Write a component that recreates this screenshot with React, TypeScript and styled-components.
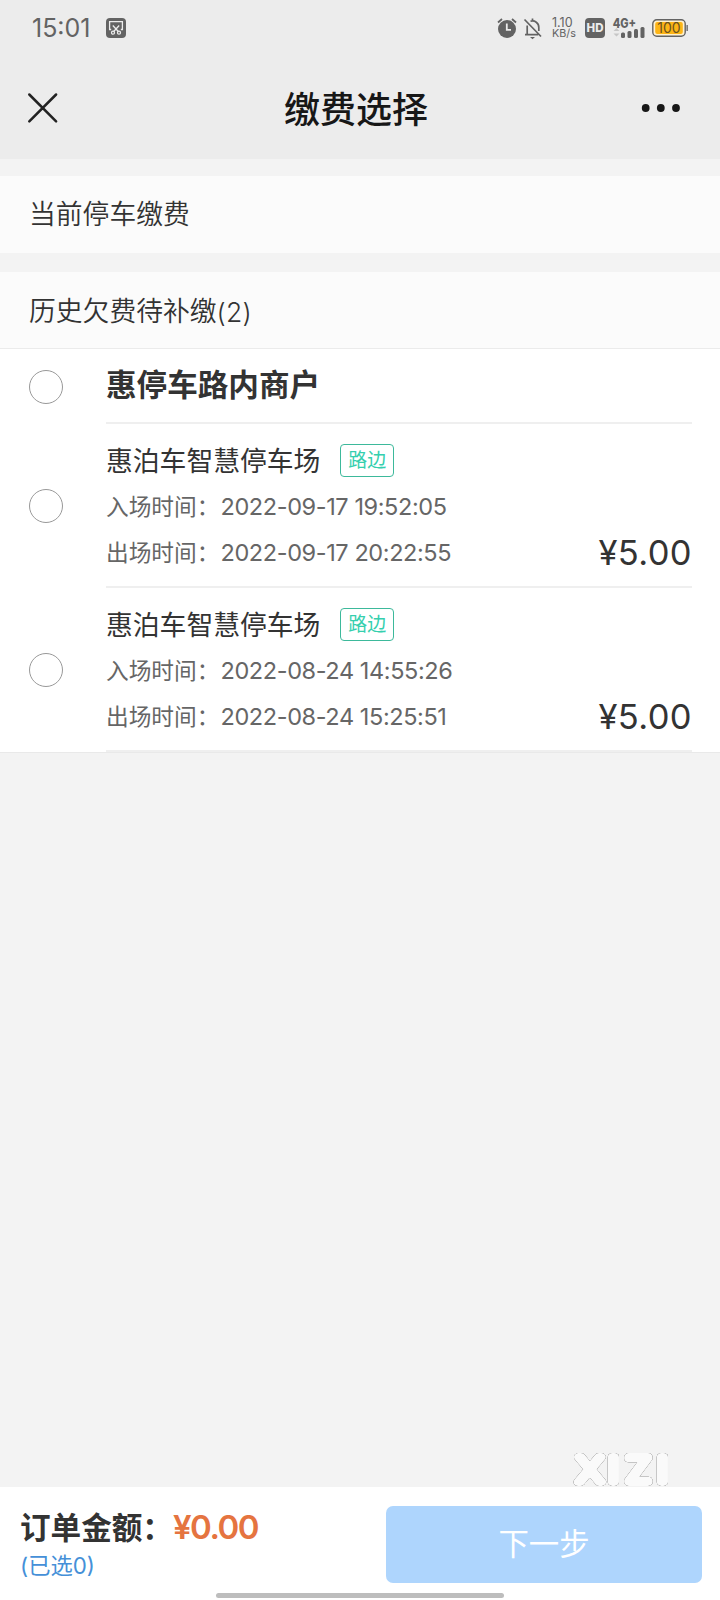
import React from "react";
import styled, { createGlobalStyle } from "styled-components";

const GlobalStyle = createGlobalStyle`
  * { box-sizing: border-box; }
  body {
    margin: 0;
    background: #f3f3f3;
    color: #333;
    font-family: Inter, "Noto Sans CJK SC", sans-serif;
  }
`;

const Page = styled.div`
  position: relative;
  width: 720px;
  height: 1600px;
  display: flex;
  flex-direction: column;
  overflow: hidden;
  white-space: nowrap;
`;

const Header = styled.header`
  height: 159px;
  flex: none;
  background: #ececec;
`;

const StatusBar = styled.div`
  height: 56px;
  padding: 0 32px 0 32px;
  display: flex;
  align-items: center;
  justify-content: space-between;
  color: #636363;
`;

const StatusGroup = styled.div`
  display: flex;
  align-items: center;
`;

const Clock = styled.span`
  width: 74px;
  font-size: 25px;
  line-height: 30px;
`;

const Speed = styled.div`
  width: 33px;
  font-size: 10.8px;
  line-height: 11px;
  display: flex;
  flex-direction: column;
  align-items: flex-start;
`;

const Rate = styled.span`
  font-size: 12.5px;
`;

const NavBar = styled.nav`
  height: 103px;
  padding: 0 39px 0 27px;
  display: grid;
  grid-template-columns: 40px 1fr 40px;
  align-items: center;
`;

const NavTitle = styled.h1`
  margin: 0;
  padding: 4px 0 0 4px;
  text-align: center;
  font-size: 36px;
  line-height: 50px;
  font-weight: 500;
  color: #171717;
`;

const SectionTitle = styled.h2<{ $top: number; $ruled?: boolean }>`
  margin: ${(p) => p.$top}px 0 0;
  height: 77px;
  flex: none;
  padding: ${(p) => (p.$ruled ? "1px 29px 0" : "0 29px 2px")};
  display: flex;
  align-items: center;
  background: #fbfbfb;
  border-bottom: ${(p) => (p.$ruled ? "1px solid #ebebeb" : "none")};
  font-size: 26.8px;
  line-height: 40px;
  font-weight: 350;
`;

const List = styled.section`
  background: #fff;
  flex: none;
  padding-right: 28px;
  box-shadow: 0 1px 0 #e9e9e9;
`;

const Row = styled.div<{ $height: number }>`
  height: ${(p) => p.$height}px;
  padding-left: 29px;
  display: grid;
  grid-template-columns: 77px 1fr;
  align-items: center;
`;

const Radio = styled.span`
  width: 34px;
  height: 34px;
  border: 1px solid #999;
  border-radius: 50%;
`;

const RowBody = styled.div`
  height: 100%;
  border-bottom: 2px solid #efefef;
`;

const Merchant = styled.div`
  font-size: 30.6px;
  line-height: 72px;
  font-weight: 700;
`;

const Lot = styled.div`
  padding-top: 15px;
  height: 58px;
  display: flex;
  align-items: center;
  gap: 20px;
  font-size: 26.8px;
  line-height: 32px;
`;

const Tag = styled.span`
  width: 54px;
  height: 33px;
  border: 1px solid #3db99b;
  border-radius: 4px;
  text-align: center;
  font-size: 19px;
  line-height: 31px;
  color: #35cfae;
`;

const TimeLine = styled.div`
  height: 46px;
  display: flex;
  align-items: center;
  font-size: 22.7px;
  color: #666;
`;

const TimeLabel = styled.span`
  width: 114.5px;
  display: flex;
`;

const Digits = styled.span<{ $size: number; $spacing: number }>`
  padding-top: 2px;
  font-size: ${(p) => p.$size}px;
  letter-spacing: ${(p) => p.$spacing}px;
`;

const Price = styled.span`
  margin-left: auto;
  padding-top: 2px;
  font-size: 34.5px;
  letter-spacing: 0.4px;
  color: #333;
`;

const Footer = styled.footer`
  position: relative;
  margin-top: auto;
  height: 113px;
  flex: none;
  background: #fff;
  padding: 19px 18px 0 20px;
  display: flex;
  justify-content: space-between;
`;

const Total = styled.div`
  display: flex;
  align-items: center;
  height: 42px;
  margin-top: -1px;
  font-size: 30.6px;
  font-weight: 700;
`;

const Amount = styled.span`
  padding-top: 2px;
  font-size: 33px;
  font-weight: 600;
  letter-spacing: -1.5px;
  color: #e57440;
`;

const Selected = styled.div`
  font-size: 22.3px;
  line-height: 37px;
  color: #4590d8;
`;

const NextButton = styled.button`
  width: 316px;
  height: 77px;
  padding: 0;
  border: 0;
  border-radius: 7px;
  background: #aed5fd;
  color: #fff;
  font: 400 30.4px/76px Inter, "Noto Sans CJK SC", sans-serif;
  display: flex;
  justify-content: center;
`;

const HomeBar = styled.div`
  position: absolute;
  left: 216px;
  bottom: 2px;
  width: 288px;
  height: 5px;
  border-radius: 3px;
  background: #bdbdbd;
`;

const Watermark = styled.svg`
  position: absolute;
  right: 46px;
  top: -42px;
  filter: drop-shadow(0 0 0.5px #777) drop-shadow(0 0 0.3px #999);
`;

const StatusIcons = () => (
  <svg width="67" height="28" viewBox="0 0 67 28" fill="#636363">
    <rect x="0" y="4" width="20" height="20" rx="4" />
    <text x="10" y="18.2" textAnchor="middle" fontSize="11.5" fontWeight="800" fill="#ececec">HD</text>
    <text x="27.7" y="13.5" fontSize="13" fontWeight="800" textLength="23.5" lengthAdjust="spacingAndGlyphs">4G+</text>
    <path d="M28.500 17l3-3 3 3zM28.500 19.500h6l-3 3z" fill="#c6c6c6" />
    <rect x="36" y="18.5" width="4" height="5.5" rx="1.5" />
    <rect x="42.5" y="17" width="4" height="7" rx="1.5" />
    <rect x="49" y="15" width="4" height="9" rx="1.5" />
    <rect x="55.5" y="13" width="4" height="11" rx="1.5" />
  </svg>
);

const records = [
  { enter: "2022-09-17 19:52:05", leave: "2022-09-17 20:22:55" },
  { enter: "2022-08-24 14:55:26", leave: "2022-08-24 15:25:51" },
];

export default function App() {
  return (
    <Page lang="zh-CN">
      <GlobalStyle />
      <Header>
        <StatusBar>
          <StatusGroup>
            <Clock>15:01</Clock>
            <svg width="20" height="20" viewBox="0 0 20 20" fill="none" stroke="#ececec" strokeWidth="1.3">
              <rect width="20" height="20" rx="4" fill="#636363" stroke="none" />
              <path d="M5.200 11.500H3.600V3.600h12.800v7.900h-1.600M6.800 7.500l5.500 6M13.200 7.500l-5.500 6" />
              <circle cx="7" cy="14.7" r="1.5" />
              <circle cx="13" cy="14.7" r="1.5" />
            </svg>
          </StatusGroup>
          <StatusGroup>
            <svg width="55" height="28" viewBox="0 0 55 28" fill="none" stroke="#636363" strokeWidth="1.7">
              <circle cx="10" cy="15" r="9" fill="#636363" stroke="none" />
              <path d="M1 8.500l4-3.500M15 5l4 3.500" strokeWidth="1.8" />
              <path d="M9.800 9.500v6.300h4.200" stroke="#ececec" strokeWidth="1.8" />
              <path d="M27.500 5.500l16.500 17M30.200 11.500v9.200h11M28 20.700h3M33.500 7.300a6.300 6.300 0 0 1 8.300 6.200v3.500" />
              <path d="M33 23h5l-2.500 2.200z" fill="#636363" stroke="none" />
              <path d="M35.500 4.500v2" />
            </svg>
            <Speed>
              <Rate>1.10</Rate>
              <span>KB/s</span>
            </Speed>
            <StatusIcons />
            <svg width="36" height="20" viewBox="0 0 36 20">
              <rect x=".8" y="1.8" width="32.4" height="16.4" rx="4" fill="#fff1cf" stroke="#636363" strokeWidth="1.4" />
              <rect x="3.2" y="4" width="27.6" height="12" rx="2" fill="#fdb515" />
              <rect x="34.5" y="7" width="1.3" height="6" fill="#636363" />
              <text x="17" y="15" textAnchor="middle" fontSize="14" fill="#6b5220">100</text>
            </svg>
          </StatusGroup>
        </StatusBar>
        <NavBar>
          <svg width="32" height="32" viewBox="0 0 32 32" fill="none" stroke="#222" strokeWidth="2.5" strokeLinecap="round">
            <path d="M2.300 2.500l26.800 26.800M29.100 2.500L2.300 29.300" />
          </svg>
          <NavTitle>缴费选择</NavTitle>
          <svg width="40" height="10" viewBox="0 0 40 10" fill="#171717">
            <circle cx="4.7" cy="5" r="3.9" />
            <circle cx="19.8" cy="5" r="3.9" />
            <circle cx="35" cy="5" r="3.9" />
          </svg>
        </NavBar>
      </Header>

      <SectionTitle $top={17}>当前停车缴费</SectionTitle>
      <SectionTitle $top={19} $ruled>
        历史欠费待补缴<Digits $size={26.5} $spacing={0.2}>(2)</Digits>
      </SectionTitle>

      <List>
        <Row $height={75}>
          <Radio />
          <RowBody>
            <Merchant>惠停车路内商户</Merchant>
          </RowBody>
        </Row>
        {records.map((r) => (
          <Row $height={164} key={r.enter}>
            <Radio />
            <RowBody>
              <Lot>
                惠泊车智慧停车场
                <Tag>路边</Tag>
              </Lot>
              <TimeLine>
                <TimeLabel>
                  入场时间<span>：</span>
                </TimeLabel>
                <Digits $size={23.5} $spacing={-0.4}>{r.enter}</Digits>
              </TimeLine>
              <TimeLine>
                <TimeLabel>
                  出场时间<span>：</span>
                </TimeLabel>
                <Digits $size={23.5} $spacing={-0.4}>{r.leave}</Digits>
                <Price>¥5.00</Price>
              </TimeLine>
            </RowBody>
          </Row>
        ))}
      </List>

      <Footer>
        <div>
          <Total>
            订单金额：<Amount>¥0.00</Amount>
          </Total>
          <Selected>(已选0)</Selected>
        </div>
        <NextButton>下一步</NextButton>
        <Watermark width="108" height="52" viewBox="0 0 108 52">
          <text
            transform="scale(1.2 1)"
            x="20 39.6 60.4 80.4"
            y="37.5"
            textAnchor="middle"
            fontSize="33.5"
            fontWeight="200"
            fill="#fafafa"
            stroke="#fafafa"
            strokeWidth="7.8"
            strokeLinejoin="round"
          >
            XIZI
          </text>
        </Watermark>
        <HomeBar />
      </Footer>
    </Page>
  );
}
